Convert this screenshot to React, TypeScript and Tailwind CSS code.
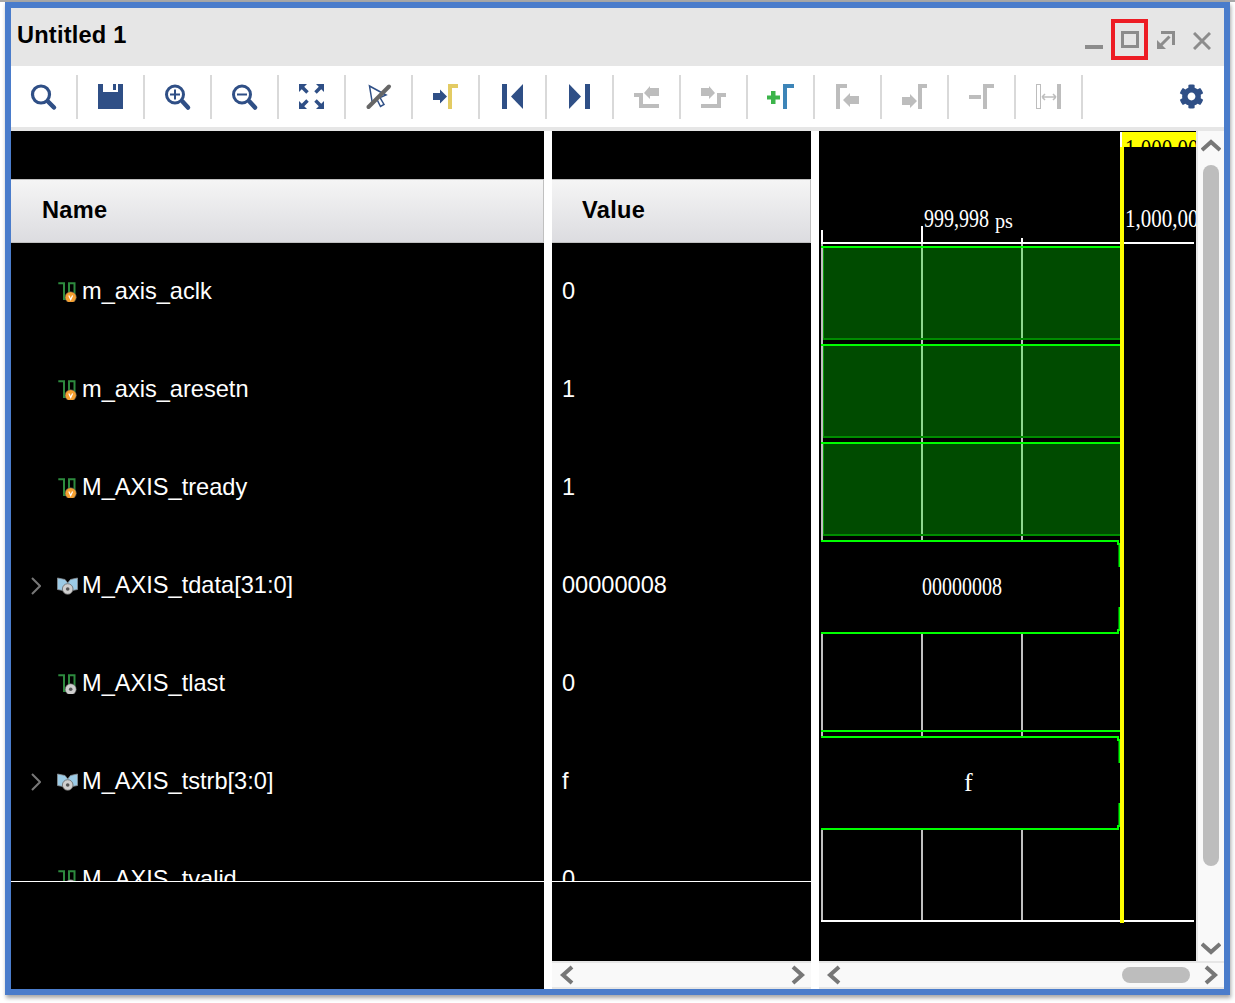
import type { ReactNode } from "react";
import { FaCog } from "react-icons/fa";

const BLUE = "#2f4f86";
const GREY = "#bdbdbd";

function Ico({ children }: { children: ReactNode }) {
  return (
    <svg width="25" height="25" viewBox="0 0 25 25" className="overflow-visible">
      {children}
    </svg>
  );
}

const toolbarIcons: ReactNode[] = [
  <Ico>
    <circle cx="10" cy="10.5" r="8.5" fill="none" stroke={BLUE} strokeWidth="3.2" />
    <path d="M17 17.5L23 23.5" stroke={BLUE} strokeWidth="4.5" strokeLinecap="round" />
  </Ico>,
  <Ico>
    <path d="M0 0H5V8H20V0H25V25H0Z" fill={BLUE} />
    <rect x="15" y="0" width="3" height="6" fill={BLUE} />
  </Ico>,
  <Ico>
    <circle cx="10" cy="10.5" r="8.5" fill="none" stroke={BLUE} strokeWidth="3" />
    <path d="M10 5.5V15.5M5 10.5H15" stroke={BLUE} strokeWidth="2" />
    <path d="M17.5 17.5L23 23.5" stroke={BLUE} strokeWidth="4.5" strokeLinecap="round" />
  </Ico>,
  <Ico>
    <circle cx="10" cy="10.5" r="8.5" fill="none" stroke={BLUE} strokeWidth="3" />
    <path d="M5 10.5H15" stroke={BLUE} strokeWidth="2" />
    <path d="M17.5 17.5L23 23.5" stroke={BLUE} strokeWidth="4.5" strokeLinecap="round" />
  </Ico>,
  <Ico>
    <path d="M0 0H8L0 8ZM25 0H17L25 8ZM0 25H8L0 17ZM25 25H17L25 17Z" fill={BLUE} />
    <path d="M3 3L8.5 8.5M22 3L16.5 8.5M3 22L8.5 16.5M22 22L16.5 16.5" stroke={BLUE} strokeWidth="3.5" />
  </Ico>,
  <Ico>
    <path d="M3.5 2L20 11L14 13.5L18 20.5L14.5 22.5L11 15.5L6.5 20Z" fill="#fff" stroke={BLUE} strokeWidth="1.5" />
    <path d="M23 2.5L2.5 23" stroke="#666" strokeWidth="4" strokeLinecap="round" />
  </Ico>,
  <Ico>
    <path d="M0 9H7V5.5L14 12.5L7 19.5V16H0Z" fill={BLUE} />
    <path d="M15 25V0H25V4H19V25Z" fill="#e3cb63" />
  </Ico>,
  <Ico>
    <rect x="2" y="0" width="5" height="25" fill={BLUE} />
    <path d="M23 0V25L11 12.5Z" fill={BLUE} />
  </Ico>,
  <Ico>
    <rect x="18" y="0" width="5" height="25" fill={BLUE} />
    <path d="M2 0V25L14 12.5Z" fill={BLUE} />
  </Ico>,
  <Ico>
    <path d="M0 9H9V20H25V24H5V13H0Z" fill={GREY} />
    <path d="M10 9L16 2V4H25V12H16V15Z" fill={GREY} />
  </Ico>,
  <Ico>
    <path d="M25 9V13H20V24H0V20H16V9Z" fill={GREY} />
    <path d="M14 9L8 2V4H0V12H8V15Z" fill={GREY} />
  </Ico>,
  <Ico>
    <path d="M-1 11.5H3V7H7.5V11.5H12V15.5H7.5V20H3V15.5H-1Z" fill="#3cb44a" />
    <path d="M15 25V0H26V4H19V25Z" fill="#3d85b8" />
  </Ico>,
  <Ico>
    <path d="M1 25V0H12V4H5V25Z" fill={GREY} />
    <path d="M8 16L15 9V12H24V20H15V23Z" fill={GREY} />
  </Ico>,
  <Ico>
    <path d="M0 13H8V10L15 17L8 24V21H0Z" fill={GREY} />
    <path d="M16 25V0H25V4H20V25Z" fill={GREY} />
  </Ico>,
  <Ico>
    <rect x="0" y="11" width="12" height="4" fill={GREY} />
    <path d="M14 25V0H25V4H18V25Z" fill={GREY} />
  </Ico>,
  <Ico>
    <rect x="0.5" y="0.5" width="4" height="24" fill="#fff" stroke={GREY} />
    <rect x="21" y="0" width="4" height="25" fill={GREY} />
    <path d="M6 13H20M6 13L9 10M6 13L9 16M20 13L17 10M20 13L17 16" fill="none" stroke={GREY} strokeWidth="1.5" />
  </Ico>,
];

type Signal = { name: string; value: string; kind: "orange" | "grey" | "bus" };

const signals: Signal[] = [
  { name: "m_axis_aclk", value: "0", kind: "orange" },
  { name: "m_axis_aresetn", value: "1", kind: "orange" },
  { name: "M_AXIS_tready", value: "1", kind: "orange" },
  { name: "M_AXIS_tdata[31:0]", value: "00000008", kind: "bus" },
  { name: "M_AXIS_tlast", value: "0", kind: "grey" },
  { name: "M_AXIS_tstrb[3:0]", value: "f", kind: "bus" },
  { name: "M_AXIS_tvalid", value: "0", kind: "grey" },
];

function SignalIcon({ kind }: { kind: Signal["kind"] }) {
  if (kind === "bus") {
    return (
      <svg width="22" height="20" viewBox="0 0 22 20">
        <path d="M0.5 2L8 3.5L10.7 7L13.5 3.5L20.5 2V13.5L15 14.5H6L0.5 13.5Z" fill="#9ccbe6" stroke="#8a8f94" strokeWidth="0.8" />
        <circle cx="10.7" cy="13" r="5.3" fill="#cfcfcf" stroke="#666" strokeWidth="0.8" />
        <circle cx="10.7" cy="13" r="1.8" fill="#555" />
      </svg>
    );
  }
  return (
    <svg width="22" height="20" viewBox="0 0 22 20">
      <path d="M1.3 1.3H7V17H12V1.3H17.5V16" fill="none" stroke="#2d8a3e" strokeWidth="2" />
      {kind === "orange" ? (
        <>
          <circle cx="13.7" cy="15.3" r="5.6" fill="#f5a030" stroke="#555" strokeWidth="0.6" />
          <path d="M11.8 13.5L13.7 17.5L15.6 13.5" fill="none" stroke="#fff" strokeWidth="1.2" />
        </>
      ) : (
        <>
          <circle cx="13.7" cy="15.3" r="5.5" fill="#cfcfcf" stroke="#666" strokeWidth="0.6" />
          <circle cx="13.7" cy="15.3" r="1.8" fill="#555" />
        </>
      )}
    </svg>
  );
}

function Chevron({ dir, className }: { dir: "left" | "right" | "up" | "down"; className?: string }) {
  const d = {
    left: "M13 2L4 10L13 18",
    right: "M3 2L12 10L3 18",
    up: "M1 11L10 3L19 11",
    down: "M1 2L10 10L19 2",
  }[dir];
  const horizontal = dir === "left" || dir === "right";
  return (
    <svg
      width={horizontal ? 16 : 20}
      height={horizontal ? 20 : 13}
      viewBox={horizontal ? "0 0 16 20" : "0 0 20 13"}
      className={className}
    >
      <path d={d} fill="none" stroke="#777" strokeWidth="4" />
    </svg>
  );
}

function ColumnHeader({ label, className }: { label: string; className: string }) {
  return (
    <div
      className={`h-[64px] flex items-center bg-gradient-to-b from-[#f5f5f5] to-[#dcdce0] border-y border-r border-[#c0c0c0] text-black font-bold tracking-[0.3px] ${className}`}
    >
      {label}
    </div>
  );
}

function Waveform() {
  const greenRows = [246, 344, 442];
  const serif = "'Liberation Serif', serif";
  return (
    <svg width="377" height="830" viewBox="819 131 377 830" className="block">
      <rect x="819" y="131" width="377" height="830" fill="#000" />

      {/* cursor label */}
      <clipPath id="label-clip">
        <rect x="1120" y="132" width="76" height="15" />
      </clipPath>
      <rect x="1120" y="132" width="2" height="15" fill="#fff" />
      <rect x="1122" y="132" width="74" height="15" fill="#ffff00" />
      <g clipPath="url(#label-clip)">
        <text x="1125" y="157" fontFamily={serif} fontSize="26" textLength="84" lengthAdjust="spacingAndGlyphs" fill="#000">
          1,000,000
        </text>
      </g>

      {/* time axis */}
      <text x="924" y="227" fontFamily={serif} fontSize="26" textLength="65" lengthAdjust="spacingAndGlyphs" fill="#fff">
        999,998
      </text>
      <text x="995" y="228" fontFamily={serif} fontSize="21" textLength="18" lengthAdjust="spacingAndGlyphs" fill="#fff">
        ps
      </text>
      <text x="1125" y="227" fontFamily={serif} fontSize="26" textLength="84" lengthAdjust="spacingAndGlyphs" fill="#fff">
        1,000,000
      </text>
      <rect x="821" y="230" width="2" height="14" fill="#fff" />
      <rect x="921" y="226" width="2" height="18" fill="#fff" />
      <rect x="1021" y="238" width="2" height="6" fill="#fff" />
      <rect x="821" y="242" width="373" height="2" fill="#fff" />

      {/* grid */}
      {[821, 921, 1021].map((x) => (
        <rect key={x} x={x} y="244" width="2" height="676" fill="#c0c0c0" />
      ))}

      {/* high signals */}
      {greenRows.map((y) => (
        <g key={y}>
          <rect x="823" y={y + 2} width="297" height="90" fill="#004b00" />
          <rect x="823" y={y + 2} width="1" height="90" fill="#0a9a0a" />
          <rect x="921" y={y + 2} width="2" height="90" fill="#8ed88e" />
          <rect x="1021" y={y + 2} width="2" height="90" fill="#8ed88e" />
          <rect x="821" y={y} width="299" height="2" fill="#00ff00" />
          <rect x="823" y={y + 92} width="297" height="2" fill="#008c00" />
        </g>
      ))}

      {/* buses */}
      {[540, 736].map((y) => (
        <g key={y}>
          <rect x="821" y={y} width="299" height="94" fill="#000" />
          <path
            d={`M821 ${y + 1}H1118V${y + 4}H1119.5V${y + 27}M1119.5 ${y + 67}V${y + 90}H1118V${y + 93}H821`}
            fill="none"
            stroke="#00ff00"
            strokeWidth="2"
          />
        </g>
      ))}
      <text x="922" y="595" fontFamily={serif} fontSize="26" textLength="80" lengthAdjust="spacingAndGlyphs" fill="#fff">
        00000008
      </text>
      <text x="964" y="791" fontFamily={serif} fontSize="26" fill="#fff">
        f
      </text>

      {/* low signal */}
      <rect x="821" y="730" width="299" height="2" fill="#00ff00" />

      {/* bottom axis and cursor */}
      <rect x="821" y="920" width="373" height="2" fill="#fff" />
      <rect x="1120" y="147" width="4" height="776" fill="#ffff00" />
    </svg>
  );
}

export default function App() {
  return (
    <div className="w-[1235px] h-[1003px] bg-white overflow-hidden [font-family:'Liberation_Sans',Arial,sans-serif] text-[23.6px]">
      <div className="h-[2px] bg-[#a8a8a8]" />
      <div className="ml-[5px] w-[1225px] h-[993px] border-[6px] border-[#4a7ccb] bg-white shadow-[1px_3px_4px_rgba(0,0,0,0.35)]">
        {/* title bar */}
        <div className="h-[58px] bg-[#e6e6e6] flex items-start pl-[6px]">
          <div className="mt-[10px] font-bold text-black leading-[34px] tracking-[0.2px]">Untitled 1</div>
          <div className="ml-auto mr-[13px] flex items-start">
            <svg width="18" height="18" viewBox="0 0 18 18" className="mt-[24px]">
              <rect x="0" y="13" width="18" height="4" fill="#8c8c8c" />
            </svg>
            <div className="ml-[8px] mt-[11px] w-[37px] h-[41px] border-[4px] border-[#ed1c24] flex items-center justify-center">
              <div className="w-[18px] h-[17px] border-[3px] border-[#8c8c8c]" />
            </div>
            <svg width="18" height="18" viewBox="0 0 18 18" className="ml-[9px] mt-[23px]">
              <path d="M4 1.5H16.5V14" fill="none" stroke="#8c8c8c" strokeWidth="3" />
              <path d="M0 18V9L9 18Z" fill="#8c8c8c" />
              <path d="M12.5 5.5L4 14" stroke="#8c8c8c" strokeWidth="3" />
            </svg>
            <svg width="18" height="18" viewBox="0 0 18 18" className="ml-[18px] mt-[24px]">
              <path d="M1 1L17 17M17 1L1 17" stroke="#8c8c8c" strokeWidth="3" />
            </svg>
          </div>
        </div>

        {/* toolbar */}
        <div className="h-[61px] bg-white flex items-center">
          {toolbarIcons.map((icon, i) => (
            <div key={i} className="flex items-center">
              <div className="w-[65px] flex items-center justify-center">{icon}</div>
              <div className="w-[2px] h-[44px] bg-[#d9d9d9]" />
            </div>
          ))}
          <div className="ml-auto mr-[20px] flex">
            <FaCog size={25} color={BLUE} />
          </div>
        </div>
        <div className="h-[4px] bg-[#e6e6e6]" />

        {/* panels */}
        <div className="flex h-[858px] bg-white">
          <div className="w-[533px] bg-black">
            <div className="h-[48px]" />
            <ColumnHeader label="Name" className="pl-[31px]" />
            <div className="h-[639px] overflow-hidden border-b border-white">
              {signals.map((s) => (
                <div key={s.name} className="h-[98px] flex items-center pl-[20px] text-white">
                  <div className="w-[26px] flex">
                    {s.kind === "bus" && (
                      <svg width="10" height="18" viewBox="0 0 10 18">
                        <path d="M1 1L9 9L1 17" fill="none" stroke="#777" strokeWidth="2" />
                      </svg>
                    )}
                  </div>
                  <div className="w-[25px] flex">
                    <SignalIcon kind={s.kind} />
                  </div>
                  <span className="-mt-[1px]">{s.name}</span>
                </div>
              ))}
            </div>
          </div>

          <div className="ml-[8px] w-[259px] flex flex-col">
            <div className="h-[830px] bg-black">
              <div className="h-[48px]" />
              <ColumnHeader label="Value" className="pl-[30px]" />
              <div className="h-[639px] overflow-hidden border-b border-white">
                {signals.map((s) => (
                  <div key={s.name} className="h-[98px] flex items-center pl-[10px] text-white">
                    <span className="-mt-[1px]">{s.value}</span>
                  </div>
                ))}
              </div>
            </div>
            <div className="h-[28px] bg-[#f9f9f9] border-t-2 border-b-2 border-[#e6e6e6] flex items-center justify-between pl-[7px] pr-[5px]">
              <Chevron dir="left" />
              <Chevron dir="right" />
            </div>
          </div>

          <div className="ml-[8px] w-[405px] flex flex-col">
            <div className="flex h-[830px]">
              <Waveform />
              <div className="w-[28px] bg-[#f9f9f9] border-l-2 border-[#e6e6e6] flex flex-col items-center">
                <Chevron dir="up" className="mt-[8px]" />
                <div className="mt-[13px] w-[16px] h-[701px] rounded-full bg-[#bdbdbd]" />
                <Chevron dir="down" className="mt-[76px]" />
              </div>
            </div>
            <div className="h-[28px] bg-[#f9f9f9] border-t-2 border-b-2 border-[#e6e6e6] flex items-center pl-[7px] pr-[5px]">
              <Chevron dir="left" />
              <div className="ml-auto mr-[13px] w-[68px] h-[16px] rounded-full bg-[#bdbdbd]" />
              <Chevron dir="right" />
            </div>
          </div>
        </div>
      </div>
    </div>
  );
}
